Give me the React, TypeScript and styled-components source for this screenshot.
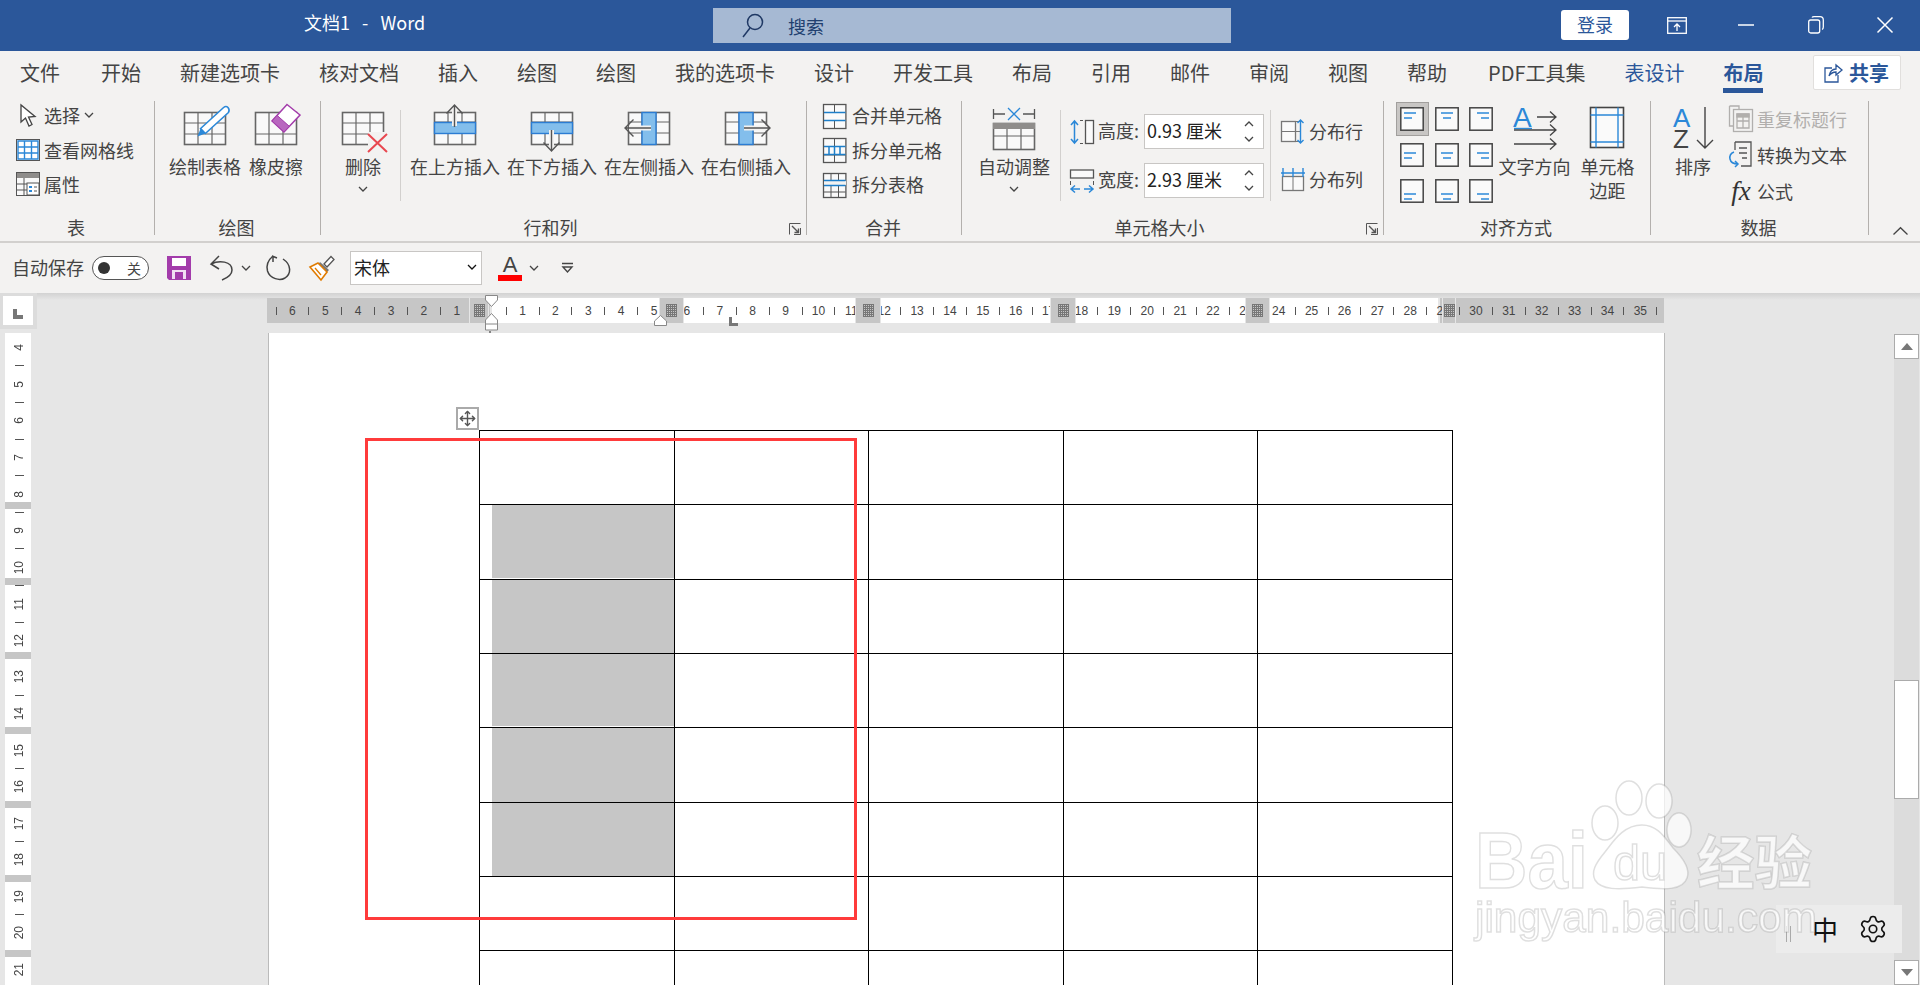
import React from 'react';
import styled, { createGlobalStyle } from 'styled-components';
import { Move, Settings } from 'lucide-react';

const GlobalStyle = createGlobalStyle`
  html, body { margin: 0; padding: 0; background: #e6e6e6; }
  * { box-sizing: border-box; }
  body { font-family: "Noto Sans CJK SC", "Noto Sans", sans-serif; color: #444; overflow: hidden; }
`;

const BLUE = '#2b88d8';
const LINE = '#666';
const PANEL = '#f3f2f1';

const AppFrame = styled.div`
  position: relative;
  width: 1920px;
  height: 985px;
  overflow: hidden;
  display: flex;
  flex-direction: column;
`;

const Ico = styled.svg`
  display: block;
  flex-shrink: 0;
  overflow: visible;
`;

/* title bar */
const TitleBar = styled.div`
  height: 51px;
  background: #2b579a;
  display: flex;
  align-items: flex-start;
  flex-shrink: 0;
`;
const DocTitle = styled.div`
  margin: 9px 0 0 304px;
  width: 409px;
  color: #fff;
  font-size: 18px;
  line-height: 26px;
  white-space: pre;
`;
const SearchBox = styled.div`
  margin-top: 8px;
  width: 518px;
  height: 35px;
  background: #a6b9d3;
  display: flex;
  align-items: center;
  padding-left: 29px;
  gap: 24px;
  color: #21406f;
  font-size: 18px;
  line-height: 22px;
`;
const LoginButton = styled.div`
  margin: 10px 0 0 330px;
  width: 68px;
  height: 30px;
  background: #fff;
  border-radius: 3px;
  color: #2b579a;
  font-size: 18px;
  line-height: 28px;
  text-align: center;
`;
const WindowControls = styled.div`
  margin-left: auto;
  display: flex;
`;
const WinButton = styled.div`
  width: 69.5px;
  height: 50px;
  display: flex;
  align-items: center;
  justify-content: center;
`;

/* tabs */
const TabRow = styled.div`
  height: 46px;
  background: ${PANEL};
  display: flex;
  gap: 39px;
  padding-left: 20px;
  flex-shrink: 0;
`;
const Tab = styled.div<{ $active?: boolean; $context?: boolean; $mr?: number; $ml?: number }>`
  height: 42px;
  padding-top: 9px;
  font-size: 20px;
  line-height: 26px;
  white-space: nowrap;
  margin-right: ${p => p.$mr ?? 0}px;
  margin-left: ${p => p.$ml ?? 0}px;
  color: ${p => (p.$active || p.$context ? '#2b579a' : '#444')};
  font-weight: ${p => (p.$active ? 700 : 400)};
  border-bottom: ${p => (p.$active ? '5px solid #2b579a' : 'none')};
`;
const ShareButton = styled.div`
  margin: 4px 19px 0 auto;
  width: 88px;
  height: 35px;
  background: #fff;
  border: 1px solid #e1dfdd;
  border-radius: 2px;
  display: flex;
  align-items: center;
  padding-left: 10px;
  gap: 7px;
  color: #2b579a;
  font-size: 20px;
  font-weight: 700;
`;

/* ribbon */
const Ribbon = styled.div`
  height: 146px;
  background: ${PANEL};
  border-bottom: 2px solid #d2d0ce;
  display: flex;
  flex-shrink: 0;
`;
const Group = styled.div<{ $w: number }>`
  position: relative;
  width: ${p => p.$w}px;
  height: 144px;
  padding-top: 4px;
  display: flex;
  flex-direction: column;
  flex-shrink: 0;
`;
const GroupBody = styled.div<{ $pl: number; $gap?: number }>`
  height: 114px;
  display: flex;
  align-items: flex-start;
  padding-left: ${p => p.$pl}px;
  gap: ${p => p.$gap ?? 0}px;
`;
const GroupLabel = styled.div<{ $launcher?: boolean }>`
  height: 26px;
  font-size: 18px;
  line-height: 24px;
  text-align: center;
  padding-right: ${p => (p.$launcher ? 26 : 2)}px;
`;
const GroupSep = styled.div`
  width: 1px;
  height: 134px;
  margin-top: 4px;
  background: #b3b0ad;
  flex-shrink: 0;
`;
const InnerSep = styled.div<{ $ml: number; $mr: number }>`
  width: 1px;
  height: 91px;
  margin: 9px ${p => p.$mr}px 0 ${p => p.$ml}px;
  background: #d2d0ce;
  flex-shrink: 0;
`;
const Launcher = styled.div`
  position: absolute;
  right: 5px;
  bottom: 6px;
`;
const BigButton = styled.div<{ $w?: number; $ml?: number; $mr?: number }>`
  width: ${p => (p.$w ? `${p.$w}px` : 'auto')};
  margin-left: ${p => p.$ml ?? 0}px;
  margin-right: ${p => p.$mr ?? 0}px;
  padding-top: 3px;
  display: flex;
  flex-direction: column;
  align-items: center;
  font-size: 18px;
  line-height: 24px;
  white-space: nowrap;
  flex-shrink: 0;
`;
const BigText = styled.div`
  margin-top: 2px;
  text-align: center;
`;
const BigCaret = styled.div`
  margin-top: 8px;
`;
const RowStack = styled.div<{ $top: number; $h: number; $ml?: number }>`
  margin-top: ${p => p.$top}px;
  margin-left: ${p => p.$ml ?? 0}px;
  display: flex;
  flex-direction: column;
  & > * { height: ${p => p.$h}px; }
`;
const IconRow = styled.div<{ $gap: number; $muted?: boolean }>`
  display: flex;
  align-items: center;
  gap: ${p => p.$gap}px;
  font-size: 18px;
  line-height: 24px;
  white-space: nowrap;
  color: ${p => (p.$muted ? '#b1afad' : '#444')};
`;
const IconSlot = styled.div`
  width: 24px;
  display: flex;
  justify-content: center;
  flex-shrink: 0;
`;
const SizeStack = styled.div`
  margin-top: 13px;
  display: flex;
  flex-direction: column;
  gap: 14px;
`;
const SizeRow = styled.div`
  height: 35px;
  display: flex;
  align-items: center;
  font-size: 18px;
  line-height: 22px;
`;
const SizeLabel = styled.div`
  margin-left: 4px;
  width: 46px;
  white-space: nowrap;
  padding-bottom: 4px;
`;
const SizeInput = styled.div`
  width: 120px;
  height: 35px;
  background: #fff;
  border: 1px solid #c8c6c4;
  display: flex;
  align-items: center;
  justify-content: space-between;
  padding: 0 9px 3px 2px;
  color: #222;
  white-space: pre;
`;
const Spinner = styled.div`
  display: flex;
  flex-direction: column;
  gap: 9px;
  margin-top: 3px;
`;
const DistributeStack = styled.div`
  margin-top: 18px;
  display: flex;
  flex-direction: column;
  gap: 24px;
`;
const AlignGrid = styled.div`
  display: grid;
  grid-template-columns: repeat(3, 34.5px);
  grid-auto-rows: 36px;
  flex-shrink: 0;
`;
const AlignCell = styled.div<{ $selected?: boolean }>`
  display: flex;
  align-items: center;
  justify-content: center;
  margin: 1px;
  background: ${p => (p.$selected ? '#c8c6c4' : 'transparent')};
  border: 1px solid ${p => (p.$selected ? '#a19f9d' : 'transparent')};
`;
const FxMark = styled.span`
  font-family: "Liberation Serif", serif;
  font-style: italic;
  font-size: 27px;
  line-height: 24px;
  color: #333;
`;
const Collapse = styled.div`
  position: absolute;
  right: 12px;
  bottom: 6px;
`;

/* quick access */
const Qat = styled.div`
  height: 50px;
  background: ${PANEL};
  display: flex;
  align-items: center;
  padding-left: 12px;
  font-size: 18px;
  flex-shrink: 0;
`;
const QatLabel = styled.div`
  line-height: 24px;
  padding-bottom: 2px;
`;
const QatItem = styled.div<{ $ml: number }>`
  margin-left: ${p => p.$ml}px;
  flex-shrink: 0;
`;
const Toggle = styled.div`
  width: 57px;
  height: 24px;
  border: 1px solid #555;
  border-radius: 12px;
  display: flex;
  align-items: center;
  justify-content: space-between;
  padding: 0 7px 0 5px;
  font-size: 14px;
  line-height: 20px;
  background: #fff;
`;
const ToggleDot = styled.div`
  width: 12px;
  height: 12px;
  border-radius: 50%;
  background: #333;
`;
const FontSelect = styled.div`
  width: 132px;
  height: 34px;
  background: #fff;
  border: 1px solid #c8c6c4;
  display: flex;
  align-items: center;
  justify-content: space-between;
  padding: 0 4px 3px 3px;
  line-height: 24px;
  color: #222;
`;
const FontColor = styled.div`
  width: 24px;
  height: 26px;
  display: flex;
  flex-direction: column;
  align-items: center;
  font-family: "Liberation Sans", sans-serif;
  font-size: 22px;
  line-height: 19px;
  color: #444;
`;
const FontColorBar = styled.div`
  width: 24px;
  height: 6px;
  margin-top: 1px;
  background: #f00;
`;

/* workspace */
const RulerRow = styled.div`
  height: 40px;
  display: flex;
  align-items: flex-start;
  background: linear-gradient(#d2d2d2, #e6e6e6 7px);
  flex-shrink: 0;
`;
const Corner = styled.div`
  width: 37px;
  height: 36px;
  background: #dcdcdc;
  padding: 3px 4px 4px 3px;
`;
const CornerInner = styled.div`
  height: 100%;
  background: #fff;
  padding: 13px 0 0 10px;
`;
const Ruler = styled.div`
  position: relative;
  margin: 5px 0 0 230px;
  width: 1397px;
  height: 25px;
  display: flex;
  align-items: center;
  padding-left: 0.8px;
  overflow: visible;
  background: linear-gradient(90deg, #c6c6c6 223px, #e6e6e6 223px, #e6e6e6 225px, #fff 225px, #fff 1171px, #e6e6e6 1171px, #e6e6e6 1173px, #c6c6c6 1173px);
  font-family: "Liberation Sans", sans-serif;
  font-size: 12px;
  color: #444;
`;
const RulerCell = styled.div`
  width: 16.45px;
  flex-shrink: 0;
  display: flex;
  justify-content: center;
  white-space: nowrap;
`;
const RulerTick = styled.div`
  width: 1px;
  height: 8px;
  background: #555;
`;
const ColumnMark = styled.div<{ $left: number; $w: number }>`
  position: absolute;
  left: ${p => p.$left}px;
  top: 0;
  width: ${p => p.$w}px;
  height: 25px;
  background: #c6c6c6;
  border-left: 1px solid #e6e6e6;
  border-right: 1px solid #e6e6e6;
  display: flex;
  align-items: center;
  justify-content: center;
`;
const GridDots = styled.div`
  width: 11px;
  height: 13px;
  background-color: #c6c6c6;
  background-image:
    repeating-linear-gradient(90deg, #777 0 1px, transparent 1px 2px),
    repeating-linear-gradient(0deg, #777 0 1px, transparent 1px 2px);
`;
const RulerMarker = styled.div<{ $left: number; $top: number }>`
  position: absolute;
  left: ${p => p.$left}px;
  top: ${p => p.$top}px;
`;
const Body = styled.div`
  flex: 1;
  display: flex;
  min-height: 0;
`;
const VRuler = styled.div`
  position: relative;
  margin-left: 5px;
  width: 26px;
  background: #fff;
  padding: 5.5px 0 0 2px;
  overflow: hidden;
  font-family: "Liberation Sans", sans-serif;
  font-size: 12px;
  color: #444;
  flex-shrink: 0;
`;
const VCell = styled.div`
  height: 18.3px;
  display: flex;
  align-items: center;
  justify-content: center;
`;
const VNumber = styled.span`
  writing-mode: vertical-rl;
  transform: rotate(180deg);
  line-height: 12px;
`;
const VTick = styled.div`
  width: 9px;
  height: 1px;
  background: #555;
`;
const VBand = styled.div<{ $top: number }>`
  position: absolute;
  left: 0;
  top: ${p => p.$top}px;
  width: 100%;
  height: 7px;
  background: #c6c6c6;
`;
const Page = styled.div`
  position: relative;
  margin-left: 237px;
  width: 1397px;
  background: #fff;
  border-left: 1px solid #bbb;
  border-right: 1px solid #bbb;
  padding: 97px 0 0 210px;
  overflow: hidden;
  flex-shrink: 0;
`;
const TableWrap = styled.div`
  position: relative;
  width: max-content;
`;
const MoveHandle = styled.div`
  position: absolute;
  left: -23px;
  top: -23px;
  width: 23px;
  height: 23px;
  border: 2px solid #aaa;
  background: #fff;
  display: flex;
  align-items: center;
  justify-content: center;
  color: #555;
`;
const DocTable = styled.div`
  display: grid;
  width: max-content;
  grid-template-columns: repeat(5, 193.5px);
  grid-auto-rows: 73.35px;
  gap: 1px;
  padding: 1px;
  background: #000;
`;
const Cell = styled.div<{ $shaded?: boolean; $seam?: boolean }>`
  background: ${p => (p.$shaded ? 'linear-gradient(90deg, #fff 12px, #c6c6c6 12px)' : '#fff')};
  border-bottom: ${p => (p.$seam ? '1px solid #fff' : 'none')};
`;
const RedBox = styled.div`
  position: absolute;
  left: 96px;
  top: 105px;
  width: 492px;
  height: 482px;
  border: 3px solid #ff3b3b;
`;
const Scrollbar = styled.div`
  margin: 1px 1px 0 auto;
  width: 25px;
  background: #dcdcdc;
  display: flex;
  flex-direction: column;
`;
const ScrollButton = styled.div`
  height: 25px;
  background: #fff;
  border: 1px solid #ababab;
  display: flex;
  align-items: center;
  justify-content: center;
  flex-shrink: 0;
`;
const ScrollSpace = styled.div<{ $h?: number }>`
  ${p => (p.$h ? `height: ${p.$h}px;` : 'flex: 1;')}
`;
const ScrollThumb = styled.div`
  height: 119px;
  background: #fff;
  border: 1px solid #ababab;
`;
const Watermark = styled.svg`
  position: absolute;
  left: 1473px;
  top: 780px;
  overflow: visible;
  filter: blur(0.6px);
  pointer-events: none;
`;
const Ime = styled.div`
  position: absolute;
  left: 1776px;
  top: 905px;
  width: 126px;
  height: 48px;
  background: #ececec;
  display: flex;
  align-items: center;
  color: #111;
  font-size: 26px;
`;
const ImeGrip = styled.div`
  margin-left: 10px;
  width: 5px;
  height: 16px;
  margin-top: 10px;
  border-left: 1px solid #aaa;
  border-right: 1px solid #aaa;
`;
const ImeChar = styled.div`
  margin-left: 21px;
  line-height: 30px;
`;
const ImeGear = styled.div`
  margin-left: 20px;
  display: flex;
`;

/* drawings */
const Caret = ({ up = false, color = '#444' }: { up?: boolean; color?: string }) => (
  <Ico width="10" height="6" viewBox="0 0 10 6" fill="none">
    <path d={up ? 'M1 5L5 1L9 5' : 'M1 1L5 5L9 1'} stroke={color} strokeWidth="1.3" />
  </Ico>
);

const LauncherIcon = () => (
  <Ico width="12" height="12" viewBox="0 0 12 12" fill="none" stroke="#555">
    <path d="M11.5 5V11.5H5M11.5 .5H.5V11.5" />
    <path d="M3 3L9.5 9.5M9.5 5.5V9.5H5.5" strokeWidth="1.4" />
  </Ico>
);

const Grid = ({ x, y, w, h, cols, rows, stroke = LINE }: { x: number; y: number; w: number; h: number; cols: number[]; rows: number[]; stroke?: string }) => (
  <g stroke={stroke} strokeWidth="1.2">
    <rect x={x + 0.5} y={y + 0.5} width={w} height={h} fill="#f9f9f9" strokeWidth="1.6" />
    {cols.map(c => <path key={`c${c}`} d={`M${x + c} ${y}V${y + h}`} />)}
    {rows.map(r => <path key={`r${r}`} d={`M${x} ${y + r}H${x + w}`} />)}
  </g>
);

const DrawTableIcon = () => (
  <Ico width="48" height="48" viewBox="0 0 48 48">
    <Grid x={3} y={8} w={41} h={32} cols={[14, 28]} rows={[11, 22]} />
    <path d="M19.6 24.5L42.6 3.5Q45 1.500 47 3.500Q49 6 47.400 8.500L24.400 29.500Z" fill="#fff" stroke={BLUE} strokeWidth="1.6" />
    <path d="M19.600 24.500L24.400 29.500L16.500 32.500Z" fill={BLUE} />
  </Ico>
);
const EraserIcon = () => (
  <Ico width="48" height="48" viewBox="0 0 48 48">
    <Grid x={3} y={8} w={41} h={32} cols={[14, 28]} rows={[22]} />
    <path d="M35 .5L48 11L32 28L20 17Z" fill="#fff" stroke="#a33cab" strokeWidth="1.5" />
    <path d="M25 11.300L37.300 22.300L32 28L20 17Z" fill="#b867bf" stroke="#a33cab" />
  </Ico>
);
const DeleteIcon = () => (
  <Ico width="46" height="48" viewBox="0 0 46 48">
    <Grid x={2} y={8} w={41} h={32} cols={[14, 28]} rows={[11, 22]} />
    <rect x="28" y="28" width="20" height="20" fill={PANEL} />
    <path d="M28 30L47 48M47 30L28 48" stroke="#e8474f" strokeWidth="2" />
  </Ico>
);
const InsertRowIcon = ({ below = false }: { below?: boolean }) => (
  <Ico width="46" height="48" viewBox="0 0 46 48" fill="none">
    <Grid x={2} y={8} w={41} h={32} cols={[14, 28]} rows={[10, 21]} />
    <rect x="2.500" y="18.500" width="41" height="11" fill="#83beec" stroke="#2b7cd3" strokeWidth="1.400" />
    {below ? (
      <g>
        <path d="M22.500 26V45" stroke={PANEL} strokeWidth="5" />
        <path d="M22.500 26V47M14.500 38.500L22.500 47L30.500 38.500" stroke="#555" strokeWidth="1.400" />
      </g>
    ) : (
      <g>
        <path d="M22.500 3V22" stroke={PANEL} strokeWidth="5" />
        <path d="M22.500 23V1M14.500 9.500L22.500 1L30.500 9.500" stroke="#555" strokeWidth="1.400" />
      </g>
    )}
  </Ico>
);
const InsertColIcon = ({ left = false }: { left?: boolean }) => (
  <Ico width="46" height="48" viewBox="0 0 46 48" fill="none">
    <Grid x={2} y={8} w={41} h={32} cols={[14, 28]} rows={[10, 21]} />
    <rect x="16" y="8.500" width="14" height="32" fill="#83beec" stroke="#2b7cd3" strokeWidth="1.400" />
    {left ? (
      <g>
        <path d="M25 24H3" stroke={PANEL} strokeWidth="5" />
        <path d="M25 24H-1M7.500 15.500L-1 24L7.500 32.500" stroke="#555" strokeWidth="1.400" />
      </g>
    ) : (
      <g>
        <path d="M21 24H44" stroke={PANEL} strokeWidth="5" />
        <path d="M21 24H47M38.500 15.500L47 24L38.500 32.500" stroke="#555" strokeWidth="1.400" />
      </g>
    )}
  </Ico>
);
const AutoFitIcon = () => (
  <Ico width="46" height="48" viewBox="0 0 46 48" fill="none">
    <path d="M2.500 5V15M2.500 10H14M43.500 5V15M43.500 10H32" stroke="#555" strokeWidth="1.300" />
    <path d="M17 4L29 16M29 4L17 16" stroke={BLUE} strokeWidth="1.300" />
    <Grid x={2} y={19} w={41} h={26} cols={[14, 28]} rows={[13]} />
    <rect x="2" y="19" width="42" height="6" fill="#8f8d8b" />
  </Ico>
);
const TextDirIcon = () => (
  <Ico width="48" height="48" viewBox="0 0 48 48" fill="none">
    <text x="2" y="23" fontFamily="'Liberation Sans', sans-serif" fontSize="28" fill={BLUE}>A</text>
    <path d="M3 24.500H21" stroke={BLUE} strokeWidth="1.400" />
    <path d="M26 13H45M39 7.500L45 13L39 18.500M3 26H45M39 20.500L45 26L39 31.500M3 40H45M39 34.500L45 40L39 45.500" stroke="#444" strokeWidth="1.300" />
  </Ico>
);
const CellMarginIcon = () => (
  <Ico width="48" height="48" viewBox="0 0 48 48" fill="none">
    <rect x="6.500" y="3.500" width="33" height="40" fill="#fafafa" stroke="#444" strokeWidth="1.600" />
    <path d="M12 3.500V43.500M34 3.500V43.500M6.500 11H39.500M6.500 38H39.500" stroke={BLUE} strokeWidth="1.400" />
  </Ico>
);
const SortIcon = () => (
  <Ico width="46" height="48" viewBox="0 0 46 48" fill="none">
    <text x="3" y="23" fontFamily="'Liberation Sans', sans-serif" fontSize="26" fill={BLUE}>A</text>
    <text x="3" y="44" fontFamily="'Liberation Sans', sans-serif" fontSize="26" fill="#444">Z</text>
    <path d="M35 3V44M27 36L35 44L43 36" stroke="#444" strokeWidth="1.400" />
  </Ico>
);

const AlignIcon = ({ h, v }: { h: number; v: number }) => {
  const ys = v === 0 ? [6, 11] : v === 1 ? [10, 15] : [15, 20];
  const long = h === 0 ? 4 : h === 1 ? 6 : 8;
  const short = h === 0 ? 4 : h === 1 ? 8 : 12;
  return (
    <Ico width="24" height="24" viewBox="0 0 24 24" fill="none">
      <rect x=".8" y=".8" width="22.400" height="22.400" fill="#fafafa" stroke="#444" strokeWidth="1.500" />
      <path d={`M${long} ${ys[0]}h12`} stroke={BLUE} strokeWidth="1.500" />
      <path d={`M${short} ${ys[1]}h8`} stroke={BLUE} strokeWidth="1.500" />
    </Ico>
  );
};

const CursorIcon = () => (
  <Ico width="17" height="23" viewBox="0 0 17 23" fill="#fff">
    <path d="M1 1V18L5.500 14L9 22L12 20.500L8.500 13L15 12.500Z" stroke="#444" strokeWidth="1.300" />
  </Ico>
);
const GridLinesIcon = () => (
  <Ico width="24" height="22" viewBox="0 0 24 22" fill="#fff">
    <rect x=".5" y=".5" width="23" height="21" stroke="#555" />
    <path d="M2 2H22V20H2ZM8.500 2V20M15.500 2V20M2 8H22M2 14H22" stroke={BLUE} strokeWidth="1.400" fill="#fff" />
  </Ico>
);
const PropsIcon = () => (
  <Ico width="24" height="24" viewBox="0 0 24 24" fill="none">
    <rect x=".5" y=".5" width="23" height="23" fill="#fafafa" stroke="#555" />
    <rect x="1" y="1" width="22" height="5" fill="#8f8d8b" />
    <path d="M8 6V24M1 12H11M1 18H11" stroke="#555" />
    <rect x="11" y="11" width="12" height="12" fill="#fff" stroke="#555" />
    <path d="M13 14h3v2h-3zM13 18h3v2h-3z" fill={BLUE} />
    <path d="M18 15h3M18 19h3" stroke="#555" />
  </Ico>
);
const SmallTable = ({ kind }: { kind: 'merge' | 'split' | 'splitTable' }) => (
  <Ico width="24" height="27" viewBox="0 0 24 27" fill="none">
    <rect x=".5" y="2.500" width="22.400" height="24" fill="#fafafa" stroke="#555" strokeWidth="1.300" />
    {kind === 'merge' && (
      <g>
        <path d="M11.500 2.500V10M11.500 19V26.500" stroke="#555" />
        <path d="M1 10.500H22.500M1 18.500H22.500" stroke="#1e7fc9" strokeWidth="1.600" />
      </g>
    )}
    {kind === 'split' && (
      <g>
        <path d="M11.500 2.500V26.500M1 19H22.500" stroke="#555" />
        <path d="M1 10.500H22.500M1 18.500H22.500M6 10.500V18.500M11.500 10.500V18.500M17 10.500V18.500" stroke="#1e7fc9" strokeWidth="1.500" />
      </g>
    )}
    {kind === 'splitTable' && (
      <g>
        <path d="M8 2.500V26.500M15.500 2.500V26.500M1 21H22.500" stroke="#555" />
        <rect x="1" y="10" width="22" height="4" fill={PANEL} />
        <path d="M1 9.500H22.500M1 14.500H22.500" stroke="#1e7fc9" strokeWidth="1.600" />
      </g>
    )}
  </Ico>
);
const RowHeightIcon = () => (
  <Ico width="24" height="24" viewBox="0 0 24 24" fill="none">
    <rect x="15.500" y=".5" width="8" height="23" fill="#fafafa" stroke="#555" strokeWidth="1.300" />
    <path d="M10 .5H13M10 23.500H13" stroke="#555" />
    <path d="M4.500 1V23M1 5L4.500 1L8 5M1 19L4.500 23L8 19" stroke={BLUE} strokeWidth="1.500" />
  </Ico>
);
const ColWidthIcon = () => (
  <Ico width="24" height="24" viewBox="0 0 24 24" fill="none">
    <rect x=".5" y="1" width="23" height="8" fill="#fafafa" stroke="#555" strokeWidth="1.300" />
    <path d="M.5 12V16M23.500 12V16" stroke="#555" />
    <path d="M1 20H10M14 20H23M5 16.500L1 20L5 23.500M19 16.500L23 20L19 23.500" stroke={BLUE} strokeWidth="1.500" />
  </Ico>
);
const DistRowIcon = () => (
  <Ico width="24" height="23" viewBox="0 0 24 23" fill="none">
    <rect x=".5" y="1.500" width="14" height="20" fill="#fafafa" stroke="#777" strokeWidth="1.300" />
    <path d="M1 11.500H14M14.500 1.500H20M14.500 11.500H20M14.500 21.500H20" stroke="#777" />
    <path d="M19.500 0V23M16.500 3L19.500 0L22.500 3M16.500 20L19.500 23L22.500 20" stroke={BLUE} strokeWidth="1.400" />
  </Ico>
);
const DistColIcon = () => (
  <Ico width="24" height="23" viewBox="0 0 24 23" fill="none">
    <rect x="1.500" y="8.500" width="21" height="14" fill="#fafafa" stroke="#777" strokeWidth="1.300" />
    <path d="M12 8.500V22" stroke="#777" />
    <path d="M0 5H24M2 0V9M12 0V9M22 0V9" stroke={BLUE} strokeWidth="1.400" />
  </Ico>
);
const RepeatIcon = () => (
  <Ico width="24" height="28" viewBox="0 0 24 28" fill="none" stroke="#b1afad" strokeWidth="1.300">
    <path d="M.5 1H10V4M.5 1V21H4" />
    <rect x="4.500" y="4.500" width="19" height="22" fill="#f3f2f1" />
    <path d="M8 9H20V23H8ZM14 9V23M8 16H20" />
    <rect x="8" y="9" width="12" height="3" fill="#b1afad" />
  </Ico>
);
const ConvertIcon = () => (
  <Ico width="24" height="28" viewBox="0 0 24 28" fill="none">
    <path d="M6 1H22V25H12M6 1V9" stroke="#555" strokeWidth="1.300" />
    <path d="M10 7H18M10 12H18M13 17H18" stroke="#555" strokeWidth="1.300" />
    <path d="M5 11Q0 13 1 18Q2 23 9 23M6 20L9 23L6 26" stroke={BLUE} strokeWidth="1.500" />
  </Ico>
);

const SaveIcon = () => (
  <Ico width="24" height="24" viewBox="0 0 24 24">
    <path d="M0 0H24V24H2L0 22Z" fill="#a33cab" />
    <rect x="5" y="2" width="14" height="8" fill="#fff" />
    <rect x="5" y="14" width="14" height="9" fill="#f2dff3" />
    <rect x="8" y="16" width="8" height="7" fill="#a33cab" />
  </Ico>
);
const UndoIcon = () => (
  <Ico width="23" height="26" viewBox="0 0 23 26" fill="none" stroke="#444" strokeWidth="1.500">
    <path d="M9 1L1 9L9 14M1 9C9 5 22 6 22 15C22 20 17 23 12 25" />
  </Ico>
);
const RedoIcon = () => (
  <Ico width="25" height="26" viewBox="0 0 25 26" fill="none" stroke="#444" strokeWidth="1.500">
    <path d="M7 1C1 6 .5 12 1.500 16C4 24 14 26 19 23C25 19 26 10 17 4" />
    <path d="M6 1L11 3M7 1L7 7" />
  </Ico>
);
const BrushIcon = () => (
  <Ico width="25" height="26" viewBox="0 0 25 26" fill="none">
    <path d="M14 9L21 1.500L24 4.500L17 12Z" fill="#fff" stroke="#555" strokeWidth="1.300" />
    <path d="M10 7L19 15L16 18L8 10Z" fill="#777" />
    <path d="M8 8L17 17L11 25L0 12Z" fill="#fff" stroke="#e07b00" strokeWidth="1.600" />
    <path d="M5 13L11 20" stroke="#e07b00" strokeWidth="1.300" />
  </Ico>
);
const CustomizeIcon = () => (
  <Ico width="11" height="12" viewBox="0 0 11 12" fill="none" stroke="#444" strokeWidth="1.400">
    <path d="M0 1.500H11M1 5L5.500 10L10 5Z" />
  </Ico>
);
const SearchIcon = () => (
  <Ico width="22" height="26" viewBox="0 0 22 26" fill="none" stroke="#1f3864" strokeWidth="1.500">
    <circle cx="13" cy="9" r="7.500" />
    <path d="M8 15L1 24" />
  </Ico>
);
const ShareIcon = () => (
  <Ico width="18" height="20" viewBox="0 0 18 20" fill="none" stroke="#2b579a" strokeWidth="1.300">
    <path d="M8 5H1V19H14V12" />
    <path d="M5 13C6 8 9 6 12 6V2L18 7L12 12V9C9 9 7 10 5 13Z" />
  </Ico>
);

const TABS = ['开始', '新建选项卡', '核对文档', '插入', '绘图', '绘图', '我的选项卡', '设计', '开发工具', '布局', '引用', '邮件', '审阅', '视图', '帮助'];
const RULER_STEPS = Array.from({ length: 85 }, (_, i) => -6.5 + i * 0.5);
const VRULER_STEPS = Array.from({ length: 36 }, (_, i) => 4 + i * 0.5);
const VBANDS = [169, 245, 319, 394, 468, 542, 617];
const COLUMN_MARKS = [
  { left: 392, w: 25 },
  { left: 588, w: 26 },
  { left: 783, w: 26 },
  { left: 978, w: 25 },
  { left: 1175, w: 14 },
];
const ALIGN = [0, 1, 2].flatMap(v => [0, 1, 2].map(h => ({ h, v })));
const TABLE_ROWS = Array.from({ length: 8 }, (_, i) => i);
const TABLE_COLS = [0, 1, 2, 3, 4];

const App = () => (
  <AppFrame>
    <GlobalStyle />
    <TitleBar>
      <DocTitle>文档1   -   Word</DocTitle>
      <SearchBox><SearchIcon />搜索</SearchBox>
      <LoginButton>登录</LoginButton>
      <WindowControls>
        <WinButton>
          <Ico width="20" height="17" viewBox="0 0 20 17" fill="none" stroke="#fff" strokeWidth="1.300">
            <rect x=".7" y=".7" width="18.600" height="15.600" />
            <path d="M.7 4H19.300" />
            <path d="M10 14V7.500M7 10L10 7L13 10" />
          </Ico>
        </WinButton>
        <WinButton>
          <Ico width="16" height="2" viewBox="0 0 16 2"><path d="M0 1H16" stroke="#fff" strokeWidth="1.500" /></Ico>
        </WinButton>
        <WinButton>
          <Ico width="16" height="18" viewBox="0 0 16 18" fill="none" stroke="#fff" strokeWidth="1.300">
            <rect x=".7" y="4" width="11" height="13" rx="2" />
            <path d="M4 1.500Q4.500 .7 6 .7H12Q15.300 .7 15.300 4V11Q15.300 13 14 13.500" />
          </Ico>
        </WinButton>
        <WinButton>
          <Ico width="16" height="16" viewBox="0 0 16 16"><path d="M.5 .5L15.500 15.500M15.500 .5L.5 15.500" stroke="#fff" strokeWidth="1.500" /></Ico>
        </WinButton>
      </WindowControls>
    </TitleBar>

    <TabRow>
      <Tab $mr={2}>文件</Tab>
      {TABS.map((t, i) => <Tab key={i}>{t}</Tab>)}
      <Tab $ml={2}>PDF工具集</Tab>
      <Tab $context>表设计</Tab>
      <Tab $active>布局</Tab>
      <ShareButton><ShareIcon />共享</ShareButton>
    </TabRow>

    <Ribbon>
      <Group $w={154}>
        <GroupBody $pl={16}>
          <RowStack $top={-3} $h={34.5}>
            <IconRow $gap={4}><IconSlot><CursorIcon /></IconSlot>选择<Caret /></IconRow>
            <IconRow $gap={4}><IconSlot><GridLinesIcon /></IconSlot>查看网格线</IconRow>
            <IconRow $gap={4}><IconSlot><PropsIcon /></IconSlot>属性</IconRow>
          </RowStack>
        </GroupBody>
        <GroupLabel>表</GroupLabel>
      </Group>
      <GroupSep />
      <Group $w={165}>
        <GroupBody $pl={14} $gap={8}>
          <BigButton><DrawTableIcon /><BigText>绘制表格</BigText></BigButton>
          <BigButton><EraserIcon /><BigText>橡皮擦</BigText></BigButton>
        </GroupBody>
        <GroupLabel>绘图</GroupLabel>
      </Group>
      <GroupSep />
      <Group $w={485}>
        <GroupBody $pl={19}>
          <BigButton $w={46}><DeleteIcon /><BigText>删除</BigText><BigCaret><Caret /></BigCaret></BigButton>
          <InnerSep $ml={14} $mr={9} />
          <BigButton $w={90} $mr={7}><InsertRowIcon /><BigText>在上方插入</BigText></BigButton>
          <BigButton $w={90} $mr={7}><InsertRowIcon below /><BigText>在下方插入</BigText></BigButton>
          <BigButton $w={90} $mr={7}><InsertColIcon left /><BigText>在左侧插入</BigText></BigButton>
          <BigButton $w={90}><InsertColIcon /><BigText>在右侧插入</BigText></BigButton>
        </GroupBody>
        <GroupLabel $launcher>行和列</GroupLabel>
        <Launcher><LauncherIcon /></Launcher>
      </Group>
      <GroupSep />
      <Group $w={154}>
        <GroupBody $pl={16}>
          <RowStack $top={-3} $h={34.5}>
            <IconRow $gap={5}><SmallTable kind="merge" />合并单元格</IconRow>
            <IconRow $gap={5}><SmallTable kind="split" />拆分单元格</IconRow>
            <IconRow $gap={5}><SmallTable kind="splitTable" />拆分表格</IconRow>
          </RowStack>
        </GroupBody>
        <GroupLabel>合并</GroupLabel>
      </Group>
      <GroupSep />
      <Group $w={421}>
        <GroupBody $pl={16}>
          <BigButton $w={72}><AutoFitIcon /><BigText>自动调整</BigText><BigCaret><Caret /></BigCaret></BigButton>
          <InnerSep $ml={10} $mr={9} />
          <SizeStack>
            <SizeRow>
              <RowHeightIcon /><SizeLabel>高度:</SizeLabel>
              <SizeInput>0.93 厘米<Spinner><Caret up /><Caret /></Spinner></SizeInput>
            </SizeRow>
            <SizeRow>
              <ColWidthIcon /><SizeLabel>宽度:</SizeLabel>
              <SizeInput>2.93 厘米<Spinner><Caret up /><Caret /></Spinner></SizeInput>
            </SizeRow>
          </SizeStack>
          <InnerSep $ml={6} $mr={10} />
          <DistributeStack>
            <IconRow $gap={4}><DistRowIcon />分布行</IconRow>
            <IconRow $gap={4}><DistColIcon />分布列</IconRow>
          </DistributeStack>
        </GroupBody>
        <GroupLabel $launcher>单元格大小</GroupLabel>
        <Launcher><LauncherIcon /></Launcher>
      </Group>
      <GroupSep />
      <Group $w={266}>
        <GroupBody $pl={11}>
          <AlignGrid>
            {ALIGN.map(a => (
              <AlignCell key={`${a.h}${a.v}`} $selected={a.h === 0 && a.v === 0}><AlignIcon h={a.h} v={a.v} /></AlignCell>
            ))}
          </AlignGrid>
          <BigButton $w={72}><TextDirIcon /><BigText>文字方向</BigText></BigButton>
          <BigButton $w={54} $ml={10}><CellMarginIcon /><BigText>单元格<br />边距</BigText></BigButton>
        </GroupBody>
        <GroupLabel>对齐方式</GroupLabel>
      </Group>
      <GroupSep />
      <Group $w={217}>
        <GroupBody $pl={23}>
          <BigButton $w={38}><SortIcon /><BigText>排序</BigText></BigButton>
          <RowStack $top={0} $h={36} $ml={17}>
            <IconRow $gap={4} $muted><RepeatIcon />重复标题行</IconRow>
            <IconRow $gap={4}><ConvertIcon />转换为文本</IconRow>
            <IconRow $gap={4}><IconSlot><FxMark>fx</FxMark></IconSlot>公式</IconRow>
          </RowStack>
        </GroupBody>
        <GroupLabel>数据</GroupLabel>
      </Group>
      <GroupSep />
      <Group $w={51}>
        <Collapse><Ico width="15" height="8" viewBox="0 0 15 8" fill="none"><path d="M.5 7.500L7.500 .7L14.500 7.500" stroke="#444" strokeWidth="1.300" /></Ico></Collapse>
      </Group>
    </Ribbon>

    <Qat>
      <QatLabel>自动保存</QatLabel>
      <QatItem $ml={8}><Toggle><ToggleDot />关</Toggle></QatItem>
      <QatItem $ml={18}><SaveIcon /></QatItem>
      <QatItem $ml={19}><UndoIcon /></QatItem>
      <QatItem $ml={8}><Caret /></QatItem>
      <QatItem $ml={15}><RedoIcon /></QatItem>
      <QatItem $ml={19}><BrushIcon /></QatItem>
      <QatItem $ml={15}><FontSelect>宋体<Caret color="#111" /></FontSelect></QatItem>
      <QatItem $ml={16}><FontColor>A<FontColorBar /></FontColor></QatItem>
      <QatItem $ml={7}><Caret /></QatItem>
      <QatItem $ml={23}><CustomizeIcon /></QatItem>
    </Qat>

    <RulerRow>
      <Corner>
        <CornerInner>
          <Ico width="10" height="10" viewBox="0 0 10 10"><path d="M0 0H4V6H10V10H0Z" fill="#777" /></Ico>
        </CornerInner>
      </Corner>
      <Ruler>
        {RULER_STEPS.map(n => (
          <RulerCell key={n}>
            {Number.isInteger(n) ? (n === 0 ? null : Math.abs(n)) : <RulerTick />}
          </RulerCell>
        ))}
        <ColumnMark $left={202} $w={20}><GridDots /></ColumnMark>
        {COLUMN_MARKS.map(m => <ColumnMark key={m.left} $left={m.left} $w={m.w}><GridDots /></ColumnMark>)}
        <RulerMarker $left={218} $top={-3}>
          <Ico width="13" height="40" viewBox="0 0 13 40" fill="#fff" stroke="#888">
            <path d="M.5 .5H12.500V5L6.500 11.500L.5 5Z" />
            <path d="M6.500 18.500L12.500 25V35H.5V25Z" />
            <path d="M.5 29H12.500" />
            <path d="M5 36V40H1.500" stroke="#222" fill="none" />
          </Ico>
        </RulerMarker>
        <RulerMarker $left={387} $top={17}>
          <Ico width="13" height="11" viewBox="0 0 13 11" fill="#fff" stroke="#888"><path d="M6.500 .5L12.500 6V10.500H.5V6Z" /></Ico>
        </RulerMarker>
        <RulerMarker $left={462} $top={19}>
          <Ico width="9" height="9" viewBox="0 0 9 9"><path d="M0 0H3V6H9V9H0Z" fill="#777" /></Ico>
        </RulerMarker>
      </Ruler>
    </RulerRow>

    <Body>
      <VRuler>
        {VRULER_STEPS.map(n => (
          <VCell key={n}>
            {Number.isInteger(n) ? <VNumber>{n}</VNumber> : <VTick />}
          </VCell>
        ))}
        {VBANDS.map(t => <VBand key={t} $top={t} />)}
      </VRuler>
      <Page>
        <TableWrap>
          <MoveHandle><Move size={17} strokeWidth={2} /></MoveHandle>
          <DocTable>
            {TABLE_ROWS.map(r => TABLE_COLS.map(c => (
              <Cell
                key={`${r}-${c}`}
                $shaded={c === 0 && r >= 1 && r <= 5}
                $seam={c === 0 && (r === 1 || r === 3)}
              />
            )))}
          </DocTable>
        </TableWrap>
        <RedBox />
      </Page>
      <Scrollbar>
        <ScrollButton>
          <Ico width="12" height="7" viewBox="0 0 12 7"><path d="M6 0L12 7H0Z" fill="#777" /></Ico>
        </ScrollButton>
        <ScrollSpace $h={321} />
        <ScrollThumb />
        <ScrollSpace />
        <ScrollButton>
          <Ico width="12" height="7" viewBox="0 0 12 7"><path d="M6 7L0 0H12Z" fill="#777" /></Ico>
        </ScrollButton>
      </Scrollbar>
    </Body>

    <Ime>
      <ImeGrip />
      <ImeChar>中</ImeChar>
      <ImeGear><Settings size={30} strokeWidth={1.3} /></ImeGear>
    </Ime>

    <Watermark width="345" height="165" viewBox="0 0 345 165" fill="rgba(255,255,255,0.72)" stroke="rgba(120,120,120,0.24)" strokeWidth="1.500">
      <text x="2" y="108" fontFamily="'Liberation Sans', sans-serif" fontWeight="700" fontSize="80" textLength="113" lengthAdjust="spacingAndGlyphs">Bai</text>
      <ellipse cx="156" cy="18" rx="13" ry="17" />
      <ellipse cx="186" cy="21" rx="13" ry="17" />
      <ellipse cx="132" cy="43" rx="13" ry="17" />
      <ellipse cx="206" cy="50" rx="12" ry="17" />
      <path d="M169 45C150 45 140 62 132 72C122 84 118 92 122 100C128 110 145 110 169 107C193 110 210 110 214 98C218 88 208 76 200 68C192 58 185 45 169 45Z" />
      <text x="140" y="100" fontFamily="'Liberation Sans', sans-serif" fontSize="50" textLength="54" lengthAdjust="spacingAndGlyphs">du</text>
      <text x="224" y="104" fontFamily="'Noto Sans CJK SC', sans-serif" fontWeight="700" fontSize="58" textLength="115" lengthAdjust="spacingAndGlyphs">经验</text>
      <text x="2" y="152" fontFamily="'Liberation Sans', sans-serif" fontSize="43" textLength="342" lengthAdjust="spacingAndGlyphs">jingyan.baidu.com</text>
    </Watermark>
  </AppFrame>
);

export default App;
